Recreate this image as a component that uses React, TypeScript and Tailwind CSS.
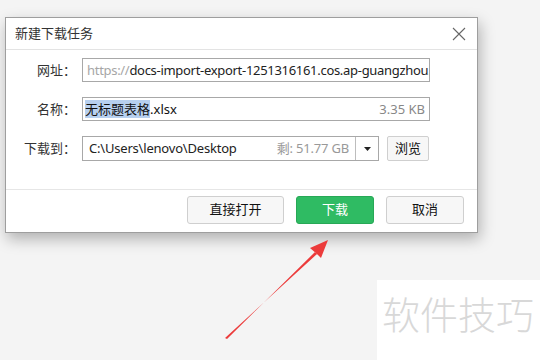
import React from 'react';

const FONT = { fontFamily: '"Noto Sans", "Noto Sans CJK SC", sans-serif' };

function Label({ text }: { text: string }) {
  return <div className="w-[70px] text-right text-[13px] text-[#333] leading-[24px]">{text}</div>;
}

function Btn({ children, green }: { children: React.ReactNode; green?: boolean }) {
  return (
    <button
      className={
        green
          ? 'w-[78px] h-[28px] rounded-[3px] bg-[#2fbb63] border border-[#27a856] text-white text-[13px]'
          : 'h-[28px] rounded-[3px] bg-[#f7f7f7] border border-[#cfcfcf] text-[#111] text-[13px]'
      }
    >
      {children}
    </button>
  );
}

export default function App() {
  return (
    <div className="w-[540px] h-[360px] bg-[#f4f4f4] relative overflow-hidden" style={FONT}>
      <div className="pt-[17px] pl-[5px]">
        <div className="w-[473px] h-[216px] bg-white border border-[#9e9e9e] shadow-[2px_6px_14px_rgba(0,0,0,0.28)] flex flex-col">
          {/* title bar */}
          <div className="h-[32px] flex items-center justify-between border-b border-[#e3e3e3] pl-[9px] pr-[11px]">
            <span className="text-[13px] text-[#333]">新建下载任务</span>
            <svg width="14" height="14" viewBox="0 0 14 14">
              <path d="M1 1 L13 13 M13 1 L1 13" stroke="#666" strokeWidth="1.1" />
            </svg>
          </div>

          {/* form */}
          <div className="flex flex-col gap-[15px] pt-[8px] h-[140px] border-b border-[#e6e6e6]">
            <div className="flex gap-[6px]">
              <Label text="网址：" />
              <div className="w-[348px] h-[24px] border border-[#a8a8a8] px-[4px] text-[13px] leading-[22px] tracking-[-0.3px] whitespace-nowrap overflow-hidden">
                <span className="text-[#a6a6a6]">https://</span>
                <span className="text-[#222]">docs-import-export-1251316161.cos.ap-guangzhou.myqcloud.com</span>
              </div>
            </div>
            <div className="flex gap-[6px]">
              <Label text="名称：" />
              <div className="w-[348px] h-[24px] border border-[#a8a8a8] px-[2px] text-[13px] leading-[22px] flex justify-between">
                <span className="text-[#111]">
                  <span className="bg-[#b7d0ef]">无标题表格</span>.xlsx
                </span>
                <span className="text-[#888] pr-[2px]">3.35 KB</span>
              </div>
            </div>
            <div className="flex gap-[6px]">
              <Label text="下载到：" />
              <div className="w-[297px] h-[25px] border border-[#a8a8a8] flex text-[13px] leading-[23px] tracking-[-0.2px]">
                <div className="flex-1 flex justify-between px-[6px]">
                  <span className="text-[#222]">C:\Users\lenovo\Desktop</span>
                  <span className="text-[#999]">剩: 51.77 GB</span>
                </div>
                <div className="w-[23px] border-l border-[#bdbdbd] flex items-center justify-center">
                  <svg width="7" height="4" viewBox="0 0 7 4">
                    <path d="M0 0 L7 0 L3.5 4 Z" fill="#222" />
                  </svg>
                </div>
              </div>
              <button className="ml-[2px] w-[42px] h-[25px] rounded-[2px] bg-[#f7f7f7] border border-[#cfcfcf] text-[13px] text-[#111]">
                浏览
              </button>
            </div>
          </div>

          {/* footer */}
          <div className="flex justify-end gap-[12px] pt-[6px] pr-[13px]">
            <span className="w-[97px] flex">
              <Btn>
                <span className="block w-[95px]">直接打开</span>
              </Btn>
            </span>
            <Btn green>下载</Btn>
            <span className="w-[78px] flex">
              <Btn>
                <span className="block w-[76px]">取消</span>
              </Btn>
            </span>
          </div>
        </div>
      </div>

      {/* watermark */}
      <div className="absolute left-[377px] top-[280px] w-[163px] h-[80px] bg-white pl-[5px] pt-[12px]">
        <span className="text-[38px] leading-[42px] text-[#d8d8d8] font-light" style={{ fontFamily: '"Noto Sans CJK SC", sans-serif' }}>
          软件技巧
        </span>
      </div>

      {/* red annotation arrow */}
      <svg className="absolute left-0 top-0" width="540" height="360" viewBox="0 0 540 360">
        <path d="M225 338 L317 254 L310 248 L328 240 L321 258 L315 252 L227 339 Z" fill="#ec3b3b" />
      </svg>
    </div>
  );
}
